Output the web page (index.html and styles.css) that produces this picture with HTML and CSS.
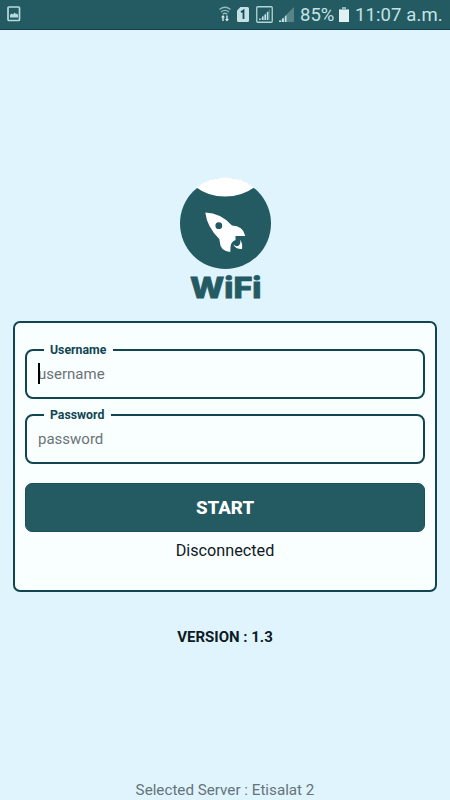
FILE: index.html
```html
<!DOCTYPE html>
<html lang="en">
<head>
<meta charset="utf-8">
<title>WiFi</title>
<link rel="stylesheet" href="styles.css">
</head>
<body>
<header class="status">
  <svg class="photo" width="14" height="16" viewBox="0 0 14 16"><rect x="1" y="1" width="11.5" height="13.5" rx="1" fill="none" stroke="#b5dbe0" stroke-width="1.7"/><path d="M3 11.5V9l1.5-1.5L6 8.500l1.500-2L9 8l1-.5 1 1.500v2.500z" fill="#b5dbe0"/></svg>
  <svg class="wifi" width="12" height="16" viewBox="0 0 12 16"><g fill="none" stroke="#91bcc0" stroke-width="1.300"><path d="M.5 3.500Q6-1 11.500 3.500M2 6Q6 2.700 10 6M3.700 8.200Q6 6.300 8.300 8.200"/></g><path d="M4 9l2 2.500H4.700V15H3.300v-3.500H2zM8 15.500L6 13h1.300V9.500h1.400V13H10z" fill="#d5edef"/></svg>
  <svg class="sim" width="12" height="15" viewBox="0 0 12 15"><path d="M3.500 0H10.500Q12 0 12 1.500v12Q12 15 10.500 15h-9Q0 15 0 13.500V3.500z" fill="#c4e2e5"/><path d="M4 5.200L6.500 3.500V12" fill="none" stroke="#174c56" stroke-width="1.800"/></svg>
  <svg class="boxed" width="17" height="17" viewBox="0 0 17 17"><rect x=".75" y=".75" width="15.500" height="15.500" rx="1" fill="none" stroke="#b2d5d9" stroke-width="1.300"/><path d="M3 14L14 3v11z" fill="#497f86"/><path d="M3 14v-1.500h1.500V14zM6 14v-3.500h1.500V14zM8.500 14V8.500H10V14zM11 14V6h1.300v8z" fill="#c4e2e5"/></svg>
  <svg class="signal" width="15" height="15" viewBox="0 0 15 15"><path d="M0 15L15 0v15z" fill="#55858b"/><path d="M0 15v-1.500h2V15zM3 15v-3.500h2V15zM6 15V9.500L7.500 8v7z" fill="#c4e2e5"/></svg>
  <span class="percent">85%</span>
  <svg class="battery" width="10" height="15" viewBox="0 0 10 15"><path d="M3 0h4v2h3v13H0V2h3z" fill="#8db4b8"/><path d="M0 3h10v12H0z" fill="#e2f2f4"/></svg>
  <span class="time">11:07 a.m.</span>
</header>
<main class="main">
  <svg class="logo" width="100" height="136" viewBox="175 174 100 136" role="img" aria-label="WiFi">
    <circle cx="225.500" cy="223.500" r="45.500" fill="#245b63"/>
    <path d="M196.500 187.500Q209 177.500 225.500 177.500T254 187.500Q242 196.500 225 196.500T196.500 187.500z" fill="#fff"/>
    <path d="M205.300 212.500Q221 213 232 225.500Q243 225.500 245.300 236L235.500 236L235.500 240Q230 241 230.300 252Q220 250.500 220 243L219.300 239Q207 227 205.300 212.500z" fill="#fff"/>
    <circle cx="218.800" cy="225.700" r="3.400" fill="#245b63"/>
    <path d="M239.800 239.500Q243 243.500 242 249Q235.500 249.200 233.300 244.500Q236.800 247.500 239 245.300T239.800 239.500z" fill="#fff"/>
    <text class="brand" x="190" y="297.500" textLength="71.500" lengthAdjust="spacingAndGlyphs">WiFi</text>
  </svg>
  <section class="card">
    <fieldset class="field"><legend>Username</legend><span class="hint focused">username</span></fieldset>
    <fieldset class="field"><legend>Password</legend><span class="hint">password</span></fieldset>
    <button class="start" type="button">START</button>
    <p class="state">Disconnected</p>
  </section>
  <p class="version">VERSION : 1.3</p>
</main>
<footer class="server">Selected Server : Etisalat 2</footer>
</body>
</html>
```
FILE: styles.css
```css
* { box-sizing: border-box; }
body {
  margin: 0;
  width: 450px;
  height: 800px;
  overflow: hidden;
  display: flex;
  flex-direction: column;
  background: #e0f4fe;
  font-family: Roboto, sans-serif;
}
p { margin: 0; }
.status {
  height: 30px;
  flex: none;
  display: flex;
  align-items: center;
  padding: 0 8px 1px 7px;
  background: #245b63;
  border-bottom: 1px solid #123f4a;
  color: #c4e2e5;
  font-size: 18.500px;
  line-height: 28px;
  white-space: nowrap;
}
.status svg { flex: none; }
.wifi { margin-left: auto; }
.sim { margin-left: 6px; }
.boxed { margin-left: 7px; }
.signal { margin-left: 6px; }
.percent { width: 35px; margin-left: 6px; padding-top: 1px; }
.battery { margin-left: 4px; }
.time { width: 87px; margin-left: 6px; padding-top: 1px; letter-spacing: .1px; }
.main {
  flex: 1;
  display: flex;
  flex-direction: column;
  align-items: center;
  padding-top: 144px;
}
.logo { display: block; flex: none; }
.brand {
  font: 800 28px Inter, sans-serif;
  fill: #245b63;
  stroke: #245b63;
  stroke-width: .8px;
}
.card {
  width: 424px;
  height: 271px;
  margin-top: 11px;
  padding: 19px 10px 0;
  border: 2px solid #114651;
  border-radius: 7px;
  background: #f9feff;
}
.field {
  height: 57px;
  margin: 0 0 8px;
  padding: 0 0 0 11px;
  min-width: 0;
  border: 2px solid #114651;
  border-radius: 8px;
}
.field legend {
  height: 16px;
  margin-left: 6px;
  padding: 0 7px 0 6px;
  color: #114651;
  font-size: 12.300px;
  font-weight: 700;
  line-height: 16px;
}
.hint {
  position: relative;
  display: block;
  margin-top: 6px;
  color: #6b7376;
  font-size: 15px;
  line-height: 20px;
}
.focused::before {
  content: "";
  position: absolute;
  left: 0;
  top: -1px;
  width: 2px;
  height: 21px;
  background: #000;
}
.start {
  display: block;
  width: 100%;
  height: 49px;
  margin-top: 19px;
  padding: 0;
  border: 1px solid #1b4f59;
  border-radius: 7px;
  background: #245b63;
  color: #fff;
  font: 800 18.700px Roboto, sans-serif;
}
.state { margin-top: 9px; text-align: center; color: #10191d; font-size: 16.200px; line-height: 20px; }
.version { margin-top: 35px; color: #0c1b24; font-size: 15px; font-weight: 700; line-height: 20px; }
.server { height: 20px; flex: none; text-align: center; color: #667379; font-size: 15.200px; line-height: 20px; }
```
